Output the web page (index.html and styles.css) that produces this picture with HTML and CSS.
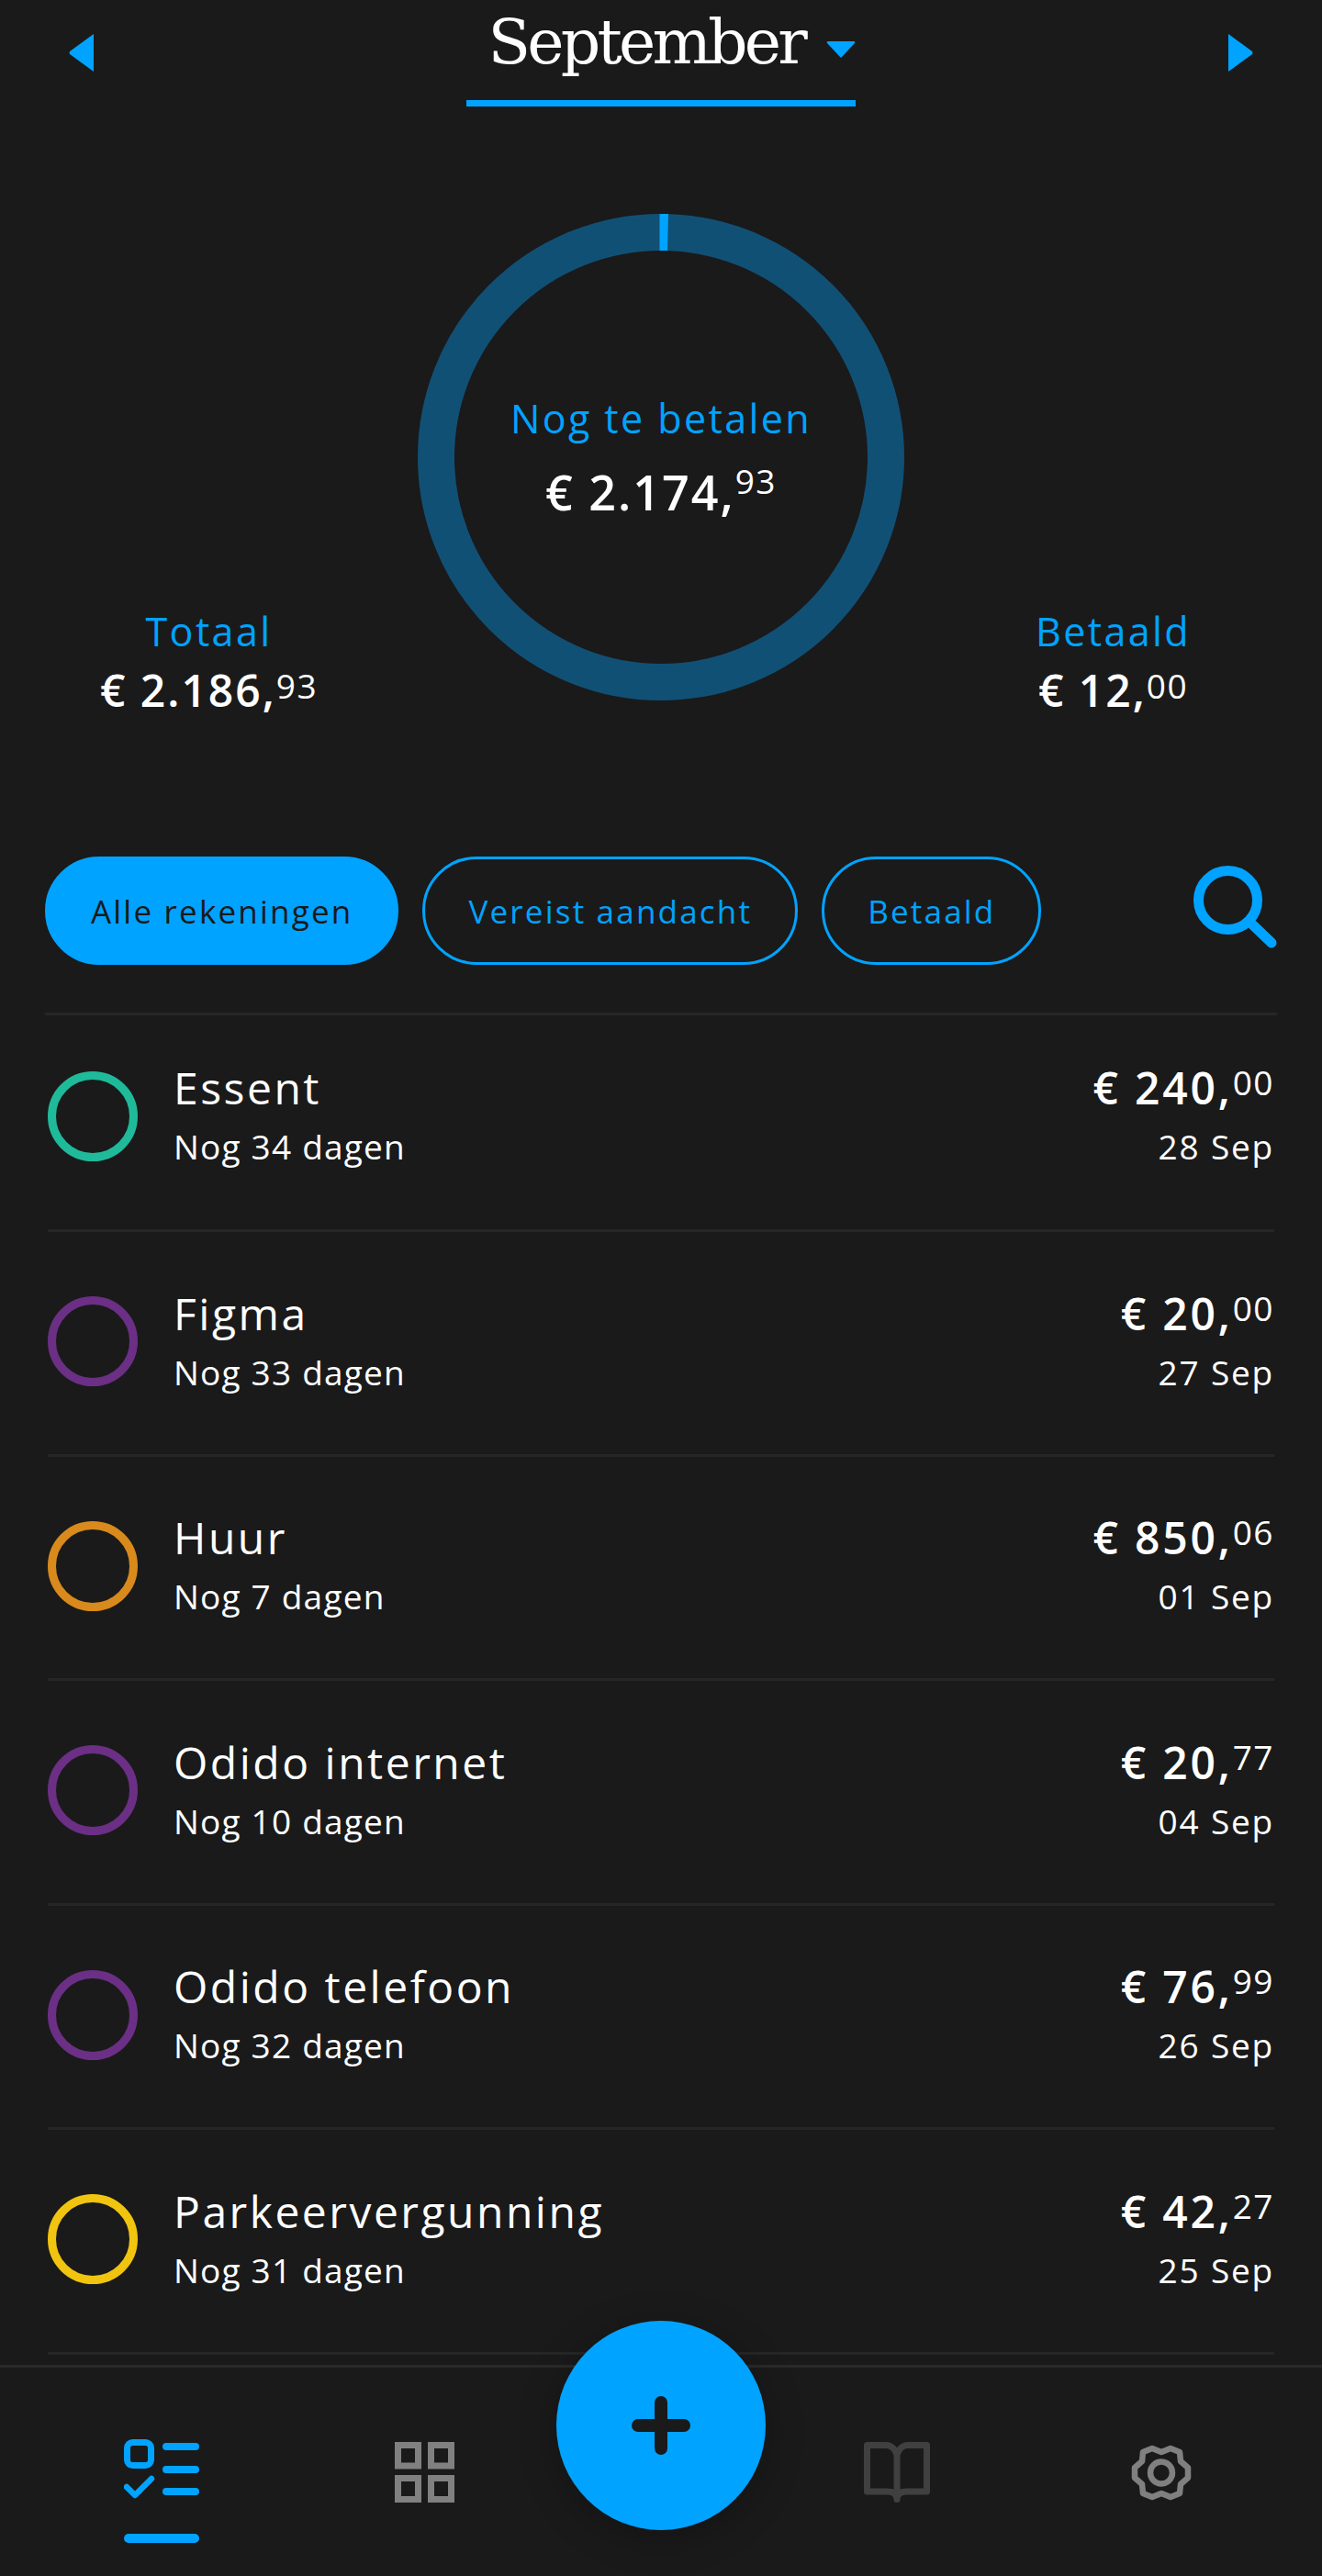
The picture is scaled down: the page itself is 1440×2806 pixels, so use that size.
FILE: index.html
```html
<!DOCTYPE html>
<html lang="nl">
<head>
<meta charset="utf-8">
<title>Rekeningen</title>
<link rel="stylesheet" href="styles.css">
</head>
<body>
<div class="app">
  <main class="main">
    <header class="month">
      <svg class="nav-arrow" viewBox="0 0 27 41"><path d="M27 0V41L1 22Q0 20.500 1 19Z" fill="#00a3ff"/></svg>
      <div class="month-title">
        <span class="month-name">September</span>
        <svg class="caret" viewBox="0 0 32 18"><path d="M2 0H30Q32 0 31 2L17 17Q16 18 15 17L1 2Q0 0 2 0Z" fill="#00a3ff"/></svg>
      </div>
      <svg class="nav-arrow" viewBox="0 0 27 41"><path d="M0 0V41L26 22Q27 20.500 26 19Z" fill="#00a3ff"/></svg>
    </header>

    <section class="hero">
      <div class="stat">
        <div class="label">Totaal</div>
        <div class="amount stat-amount">€ 2.186,<sup>93</sup></div>
      </div>
      <div class="donut">
        <svg viewBox="0 0 530 530" width="530" height="530">
          <circle cx="265" cy="265" r="245" fill="none" stroke="#115075" stroke-width="40"/>
          <path d="M263.500 0H273L272 40H263.500Z" fill="#00a3ff"/>
        </svg>
        <div class="donut-text">
          <div class="label">Nog te betalen</div>
          <div class="amount donut-amount">€ 2.174,<sup>93</sup></div>
        </div>
      </div>
      <div class="stat">
        <div class="label">Betaald</div>
        <div class="amount stat-amount">€ 12,<sup>00</sup></div>
      </div>
    </section>

    <section class="filters">
      <button class="pill pill-active">Alle rekeningen</button>
      <button class="pill">Vereist aandacht</button>
      <button class="pill">Betaald</button>
      <svg class="search" viewBox="0 0 91 90"><circle cx="37.500" cy="37.500" r="32" fill="none" stroke="#00a3ff" stroke-width="11"/><path d="M61 61L85 84" fill="none" stroke="#00a3ff" stroke-width="11" stroke-linecap="round"/></svg>
    </section>

    <ul class="list">
      <li class="row"><span class="dot dot-teal"></span><div class="info"><div class="name">Essent</div><div class="sub">Nog 34 dagen</div></div><div class="due"><div class="amount row-amount">€ 240,<sup>00</sup></div><div class="sub">28 Sep</div></div></li>
      <li class="row"><span class="dot dot-purple"></span><div class="info"><div class="name">Figma</div><div class="sub">Nog 33 dagen</div></div><div class="due"><div class="amount row-amount">€ 20,<sup>00</sup></div><div class="sub">27 Sep</div></div></li>
      <li class="row"><span class="dot dot-orange"></span><div class="info"><div class="name">Huur</div><div class="sub">Nog 7 dagen</div></div><div class="due"><div class="amount row-amount">€ 850,<sup>06</sup></div><div class="sub">01 Sep</div></div></li>
      <li class="row"><span class="dot dot-purple"></span><div class="info"><div class="name">Odido internet</div><div class="sub">Nog 10 dagen</div></div><div class="due"><div class="amount row-amount">€ 20,<sup>77</sup></div><div class="sub">04 Sep</div></div></li>
      <li class="row"><span class="dot dot-purple"></span><div class="info"><div class="name">Odido telefoon</div><div class="sub">Nog 32 dagen</div></div><div class="due"><div class="amount row-amount">€ 76,<sup>99</sup></div><div class="sub">26 Sep</div></div></li>
      <li class="row"><span class="dot dot-yellow"></span><div class="info"><div class="name">Parkeervergunning</div><div class="sub">Nog 31 dagen</div></div><div class="due"><div class="amount row-amount">€ 42,<sup>27</sup></div><div class="sub">25 Sep</div></div></li>
    </ul>
  </main>

  <nav class="tabbar">
    <div class="tab tab-active">
      <svg class="tab-icon-tasks" viewBox="0 0 82 66" fill="none" stroke="#00a3ff">
        <rect x="3.500" y="3.500" width="26" height="25" rx="6" stroke-width="7"/>
        <path d="M46 8H78M46 33H78M46 57H78" stroke-width="8" stroke-linecap="round"/>
        <path d="M3 52L12 61L30 43" stroke-width="6.500" stroke-linecap="round" stroke-linejoin="round"/>
      </svg>
      <span class="tab-indicator"></span>
    </div>
    <div class="tab">
      <svg class="tab-icon-grid" viewBox="0 0 65 66" fill="none" stroke="#808080" stroke-width="7">
        <rect x="3.500" y="3.500" width="22" height="22.500"/><rect x="39.500" y="3.500" width="22" height="22.500"/>
        <rect x="3.500" y="39.500" width="22" height="23"/><rect x="39.500" y="39.500" width="22" height="23"/>
      </svg>
    </div>
    <div class="tab-slot"></div>
    <div class="tab">
      <svg class="tab-icon-book" viewBox="0 0 72 66" fill="none" stroke="#404040" stroke-width="7" stroke-linejoin="round" stroke-linecap="round">
        <path d="M36 14C34 7 29 3.500 24 3.500H3.500V54H25C31 54 36 56 36 62.500C36 56 41 54 47 54H68.500V3.500H48C43 3.500 38 7 36 14V62"/>
      </svg>
    </div>
    <div class="tab">
      <svg class="tab-icon-gear" viewBox="0 0 66 62" fill="none" stroke="#808080" stroke-linejoin="round">
        <path d="M33 8L43 4L53 8L54 18L62 25V36L54 43L53 53L43 57L33 53L23 57L13 53L12 43L4 36V25L12 18L13 8L23 4Z" stroke-width="6.500"/>
        <circle cx="33" cy="30.500" r="12" stroke-width="6.500"/>
      </svg>
    </div>
  </nav>

  <button class="fab" aria-label="Toevoegen">
    <svg viewBox="0 0 64 64" width="64" height="64"><path d="M32 7V57M7 32H57" stroke="#1a1a1a" stroke-width="14" stroke-linecap="round"/></svg>
  </button>
</div>
</body>
</html>
```

FILE: styles.css
```css
* { box-sizing: border-box; }
html, body { margin: 0; padding: 0; background: #1a1a1a; }
body { font-family: "Open Sans", "Liberation Sans", sans-serif; color: #fff; }

.app {
  position: relative;
  display: flex;
  flex-direction: column;
  width: 1440px;
  height: 2806px;
  overflow: hidden;
  background: #1a1a1a;
}
.main { flex: 1; min-height: 0; overflow: hidden; }

/* month header */
.month {
  display: flex;
  align-items: flex-start;
  justify-content: space-between;
  height: 116px;
  padding: 37px 75px 0;
}
.nav-arrow { width: 27px; height: 41px; }
.month-title {
  display: flex;
  align-items: flex-start;
  justify-content: flex-end;
  width: 424px;
  height: 116px;
  margin-top: -37px;
  border-bottom: 7px solid #00a3ff;
}
.month-name {
  font-family: "DejaVu Serif", serif;
  font-size: 68px;
  line-height: 92px;
  letter-spacing: -3.800px;
  margin-right: 24px;
}
.caret { width: 32px; height: 18px; margin-top: 45px; }

/* hero */
.hero {
  display: grid;
  grid-template-columns: 455px 530px 455px;
  height: 817px;
  padding-top: 117px;
  padding-bottom: 170px;
}
.stat { align-self: end; margin-bottom: -17px; text-align: center; }
.label {
  font-size: 43px;
  line-height: 58px;
  letter-spacing: 2.400px;
  color: #00a3ff;
}
.amount { font-weight: 600; letter-spacing: 2px; white-space: nowrap; }
.amount sup {
  font-size: 37px;
  font-weight: 500;
  line-height: 0;
  letter-spacing: 1.500px;
  vertical-align: baseline;
  position: relative;
  top: -10px;
}
.stat-amount { margin-top: 7px; font-size: 48px; line-height: 56px; }
.stat-amount sup { top: -9px; }
.donut { position: relative; width: 530px; height: 530px; }
.donut svg { display: block; }
.donut-text {
  position: absolute;
  inset: 0;
  display: flex;
  flex-direction: column;
  align-items: center;
  justify-content: center;
  gap: 16px;
  padding-top: 2px;
}
.donut-amount { font-size: 52px; line-height: 70px; }
.donut-amount sup { top: -18px; }

/* filters */
.filters {
  display: flex;
  align-items: center;
  gap: 26px;
  margin: 0 49px 52px;
}
.pill {
  height: 118px;
  padding: 0 47px;
  border: 3px solid #00a3ff;
  border-radius: 59px;
  background: none;
  color: #00a3ff;
  font-family: inherit;
  font-size: 35px;
  letter-spacing: 2.200px;
  white-space: nowrap;
}
.pill-active { background: #00a3ff; color: #1a1a1a; font-weight: 500; }
.search { width: 91px; height: 90px; margin-left: auto; margin-bottom: 8px; }

/* list */
.list {
  list-style: none;
  margin: 0 49px;
  padding: 0;
  border-top: 3px solid #262626;
}
.row {
  display: flex;
  align-items: center;
  height: 244.500px;
  margin: 0 3px;
  border-bottom: 3px solid #262626;
}
.row:first-child { height: 236px; padding-bottom: 11px; }
.dot {
  flex: none;
  width: 98px;
  height: 98px;
  margin-right: 39px;
  margin-bottom: 3px;
  border: 9px solid;
  border-radius: 50%;
}
.dot-teal { border-color: #1fba9a; }
.dot-purple { border-color: #6b2f85; }
.dot-orange { border-color: #d88a1c; }
.dot-yellow { border-color: #f1c40f; }
.info { flex: 1; padding-bottom: 5px; }
.name { font-size: 48px; line-height: 60px; font-weight: 500; letter-spacing: 2.500px; }
.sub { font-size: 37px; font-weight: 500; line-height: 50px; margin-top: 9px; letter-spacing: 1.200px; }
.due { text-align: right; padding-bottom: 5px; }
.due .sub { letter-spacing: 1.800px; }
.row-amount { font-size: 48px; line-height: 60px; letter-spacing: 2.800px; }

/* tab bar */
.tabbar {
  flex: none;
  display: grid;
  grid-template-columns: 288px 284px 232px 282px 294px;
  height: 230px;
  padding: 0 28px 0 32px;
  border-top: 3px solid #2a2a2a;
}
.tab {
  display: flex;
  flex-direction: column;
  align-items: center;
  padding-top: 81px;
}
.tab svg { display: block; }
.tab-icon-tasks { width: 82px; height: 66px; margin-top: -3px; }
.tab-icon-grid { width: 65px; height: 66px; }
.tab-icon-book { width: 72px; height: 66px; }
.tab-icon-gear { width: 66px; height: 62px; margin-top: 3px; }
.tab-indicator {
  width: 82px;
  height: 10px;
  margin-top: 37px;
  border-radius: 5px;
  background: #00a3ff;
}
.fab {
  position: absolute;
  left: 606px;
  top: 2528px;
  display: flex;
  align-items: center;
  justify-content: center;
  width: 228px;
  height: 228px;
  padding: 0;
  border: none;
  border-radius: 50%;
  background: #00a3ff;
  box-shadow: 0 8px 40px rgba(0, 0, 0, 0.25);
}
```
